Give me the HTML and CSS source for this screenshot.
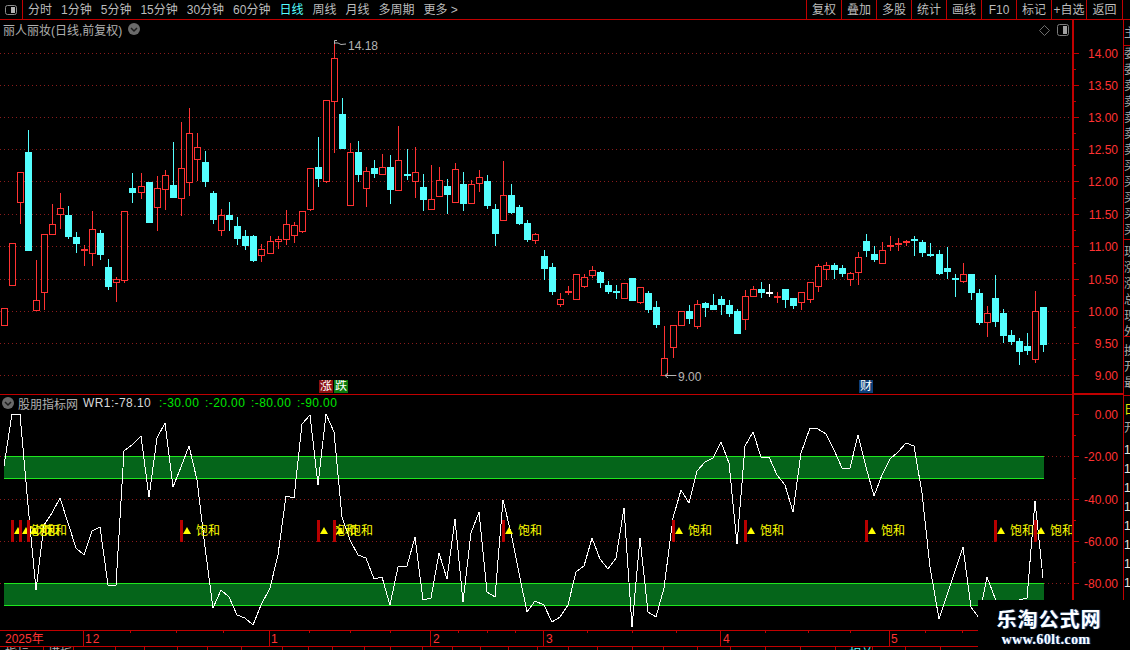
FILE: index.html
```html
<!DOCTYPE html>
<html lang="zh-CN">
<head>
    <meta charset="UTF-8">
    <meta name="viewport" content="width=device-width, initial-scale=1.0">
    <title>丽人丽妆 日线</title>
    <link rel="stylesheet" href="styles.css">
</head>
<body>
    <div class="app">
        <div class="toolbar">
            <div class="panel-toggle">
                <svg width="12" height="10" viewBox="0 0 12 10"><rect x="0.5" y="0.5" width="11" height="9" rx="2" fill="none" stroke="#8c8c8c"/><rect x="6" y="2" width="4" height="6" fill="#b4b4b4"/></svg>
            </div>
            <div class="periods">
                <span>分时</span>
                <span>1分钟</span>
                <span>5分钟</span>
                <span>15分钟</span>
                <span>30分钟</span>
                <span>60分钟</span>
                <span class="active">日线</span>
                <span>周线</span>
                <span>月线</span>
                <span>多周期</span>
                <span>更多 &gt;</span>
            </div>
            <div class="actions">
                <span>复权</span>
                <span>叠加</span>
                <span>多股</span>
                <span>统计</span>
                <span>画线</span>
                <span>F10</span>
                <span>标记</span>
                <span>+自选</span>
                <span class="last">返回</span>
            </div>
        </div>

        <div class="workspace">
            <div class="charts">
                <div class="pane pane-main">
                    <div class="pane-title">
                        <span>丽人丽妆(日线,前复权)</span>
                        <svg class="chevron" width="12" height="12" viewBox="0 0 12 12"><circle cx="6" cy="6" r="6" fill="#6a6a6a"/><polyline points="3,5 6,8 9,5" fill="none" stroke="#1c1c1c" stroke-width="1.5"/></svg>
                    </div>
                    <div class="pane-tools">
                        <svg width="11" height="11" viewBox="0 0 11 11"><path d="M5.5 0.5 L10.5 5.5 L5.5 10.5 L0.5 5.5 Z" fill="none" stroke="#6e6e6e"/></svg>
                        <svg width="12" height="12" viewBox="0 0 12 12"><rect x="0.5" y="0.5" width="11" height="11" rx="2" fill="none" stroke="#7c7c7c"/><rect x="6" y="2" width="4" height="8" fill="#a0a0a0"/></svg>
                    </div>
                    <svg id="mainChart" class="chart" width="1123" height="375" viewBox="0 20 1123 375"></svg>
                    <span class="badge badge-up">涨</span>
                    <span class="badge badge-down">跌</span>
                    <span class="badge badge-news">财</span>
                </div>

                <div class="pane pane-sub">
                    <div class="pane-title sub-title">
                        <svg class="chevron" width="12" height="12" viewBox="0 0 12 12"><circle cx="6" cy="6" r="6" fill="#6a6a6a"/><polyline points="3,5 6,8 9,5" fill="none" stroke="#1c1c1c" stroke-width="1.5"/></svg>
                        <span>股朋指标网</span>
                        <span class="wr-value">WR1:-78.10</span>
                        <span class="wr-level">:-30.00</span>
                        <span class="wr-level">:-20.00</span>
                        <span class="wr-level">:-80.00</span>
                        <span class="wr-level">:-90.00</span>
                    </div>
                    <svg id="subChart" class="chart" width="1123" height="235" viewBox="0 395 1123 235"></svg>
                </div>

                <svg id="dateAxis" class="chart" width="1123" height="20" viewBox="0 630 1123 20"></svg>
            </div>

            <div class="side">
                <div class="side-block side-top"><p>主力</p></div>
                <div class="side-block side-quote"><p>委比</p><p>委差</p><p>卖五</p><p>卖四</p><p>卖三</p><p>卖二</p><p>卖一</p><p>买一</p><p>买二</p><p>买三</p><p>买四</p><p>买五</p></div>
                <div class="side-block side-deal"><p>现价</p><p>涨跌</p><p>涨幅</p><p>总量</p><p>现量</p><p>外盘</p></div>
                <div class="side-block side-extra"><p>换手</p><p>开盘</p><p>最高</p></div>
                <div class="side-block side-stats">
                    <p class="side-flag">日</p>
                    <p class="side-head">开</p>
                    <p>1</p><p>1</p><p>1</p><p>1</p><p>1</p><p>1</p><p>1</p><p>1</p>
                </div>
            </div>
        </div>

        <div class="watermark">
            <div class="wm-name">乐淘公式网</div>
            <div class="wm-url">www.60lt.com</div>
        </div>
    </div>

    <script src="chart.js"></script>
</body>
</html>
```

FILE: styles.css
```css
html, body {
    margin: 0;
    padding: 0;
    background: #000;
    overflow: hidden;
}

.app {
    position: relative;
    width: 1130px;
    height: 650px;
    overflow: hidden;
    font-family: "Liberation Sans", "Noto Sans CJK SC", sans-serif;
    font-size: 12px;
    color: #bcbcbc;
}

.toolbar {
    display: flex;
    height: 19px;
    line-height: 20px;
    border-bottom: 1px solid #c00000;
}

.panel-toggle {
    display: flex;
    align-items: center;
    justify-content: center;
    width: 23px;
    border-right: 1px solid #c00000;
    box-sizing: border-box;
}

.periods {
    display: flex;
    gap: 9px;
    padding-left: 5px;
}

.periods .active {
    color: #54ffff;
}

.actions {
    display: flex;
    margin-left: auto;
    margin-right: 7px;
}

.actions span {
    width: 35px;
    text-align: center;
    border-left: 1px solid #c00000;
    box-sizing: border-box;
    white-space: nowrap;
    overflow: hidden;
}

.actions .last {
    width: 37px;
    border-right: 1px solid #c00000;
}

.workspace {
    display: flex;
    height: 630px;
}

.charts {
    width: 1123px;
    flex: none;
}

.pane {
    position: relative;
}

.pane-main {
    height: 375px;
}

.pane-sub {
    height: 235px;
}

.chart {
    display: block;
}

.pane-title {
    position: absolute;
    top: 1px;
    left: 3px;
    display: flex;
    align-items: center;
    gap: 6px;
    height: 16px;
    color: #b0b0b0;
}

.sub-title {
    top: 0;
    left: 2px;
    gap: 4px;
}

.wr-value {
    margin-left: 1px;
    margin-right: 2px;
    letter-spacing: 0.4px;
    color: #d8d8d8;
}

.wr-level {
    margin-left: 2px;
    width: 40px;
    letter-spacing: 0.4px;
    white-space: nowrap;
    color: #00e600;
}

.pane-tools {
    position: absolute;
    top: 4px;
    left: 1039px;
    display: flex;
    align-items: center;
    gap: 7px;
}

.badge {
    position: absolute;
    top: 360px;
    width: 14px;
    height: 13px;
    line-height: 13px;
    text-align: center;
    color: #fff;
    overflow: hidden;
}

.badge-up {
    left: 319px;
    background: #8c0f0f;
}

.badge-down {
    left: 334px;
    background: #0d7a0d;
}

.badge-news {
    left: 859px;
    background: #0d3f7a;
}

.side {
    flex: 1;
    border-left: 1px solid #c00000;
    overflow: hidden;
    white-space: nowrap;
    line-height: 16px;
    color: #a8a8a8;
}

.side p {
    margin: 0;
    width: 30px;
}

.side-block {
    border-bottom: 1px solid #c00000;
    box-sizing: border-box;
    overflow: hidden;
}

.side-top {
    height: 26px;
    padding-top: 5px;
}

.side-quote {
    height: 194px;
}

.side-deal {
    height: 97px;
    padding-top: 4px;
}

.side-extra {
    height: 59px;
    padding-top: 6px;
}

.side-stats {
    border-bottom: none;
    padding-top: 7px;
    color: #e6e6e6;
}

.side-stats p {
    line-height: 19px;
}

.side-stats .side-flag {
    color: #e8e800;
    line-height: 14px;
    margin-bottom: 2px;
}

.side-stats .side-head {
    color: #a8a8a8;
    line-height: 18px;
    margin-bottom: 4px;
}

.watermark {
    position: absolute;
    left: 978px;
    top: 600px;
    width: 152px;
    height: 50px;
    background: #000;
    text-align: center;
    color: #fff;
}

.wm-name {
    padding-top: 6px;
    padding-right: 10px;
    font-family: "Noto Sans CJK SC", sans-serif;
    font-weight: 700;
    font-size: 20px;
    line-height: 26px;
    letter-spacing: 1px;
    text-shadow: 1px 0 1px #3b6ea8;
}

.wm-url {
    padding-right: 16px;
    font-family: "Liberation Serif", serif;
    font-weight: 700;
    font-size: 14px;
    line-height: 16px;
    letter-spacing: 0.4px;
    text-shadow: 1px 0 1px #3b6ea8;
}

/* svg parts of the chart */
.grid {
    stroke: #8a1c1c;
    stroke-width: 1;
    stroke-dasharray: 1 3;
}

.axis-line {
    stroke: #c00000;
    stroke-width: 1;
    shape-rendering: crispEdges;
}

.axis-heavy {
    stroke: #c00000;
    stroke-width: 2;
    shape-rendering: crispEdges;
}

.axis-label {
    fill: #ff3232;
    font-size: 12px;
    text-anchor: end;
}

.date-label {
    fill: #ff3232;
    font-size: 12px;
}

.date-label-wide {
    letter-spacing: 1px;
}

.candle {
    shape-rendering: crispEdges;
}

.wr-line {
    fill: none;
    stroke: #fff;
    stroke-width: 1;
    shape-rendering: crispEdges;
}

.band {
    fill: #05651a;
}

.band-edge {
    stroke: #1fe61f;
    stroke-width: 1;
    shape-rendering: crispEdges;
}

.signal-bar {
    fill: #b80000;
}

.signal-mark {
    fill: #ffff00;
}

.signal-text {
    fill: #ffff00;
    font-size: 12px;
}

.note-text {
    fill: #b4b4b4;
    font-size: 12px;
}

.note-line {
    fill: none;
    stroke: #b4b4b4;
    stroke-width: 1;
}

.tab-text {
    fill: #b4b4b4;
    font-size: 12px;
}

.tab-text-on {
    fill: #54ffff;
    font-size: 12px;
}
```

FILE: chart.js
```js
const SVG_NS = "http://www.w3.org/2000/svg";
const AXIS_X = 1072;

// high, body top, body bottom, low (pixel rows), kind
const candles = [
    [308,308,325,325,"r"],[243,243,285,285,"r"],[172,172,202,223,"r"],[130,152,250,250,"c"],[260,300,310,310,"r"],
    [234,234,292,309,"r"],[204,224,234,234,"r"],[193,208,214,228,"r"],[206,215,236,238,"c"],[232,237,243,252,"c"],
    [245,249,250,265,"r"],[211,229,253,265,"r"],[230,233,254,259,"c"],[259,267,286,289,"c"],[277,279,282,301,"r"],
    [211,211,280,282,"r"],[173,188,192,202,"c"],[173,186,192,198,"r"],[182,182,222,222,"c"],[176,188,207,230,"r"],
    [170,175,189,209,"r"],[142,185,197,197,"c"],[122,168,198,215,"r"],[108,133,182,195,"r"],[133,147,159,180,"r"],
    [151,162,181,186,"c"],[191,193,219,223,"c"],[209,215,230,235,"r"],[202,215,219,230,"c"],[217,226,238,244,"c"],
    [230,236,245,249,"c"],[235,236,260,261,"c"],[244,249,255,261,"r"],[236,241,253,253,"r"],[236,239,241,248,"r"],
    [210,224,239,244,"r"],[222,225,235,242,"r"],[211,211,231,232,"r"],[168,168,209,210,"r"],[137,167,178,186,"c"],
    [100,100,181,182,"r"],[43,58,101,152,"r"],[98,114,148,148,"c"],[143,152,205,205,"r"],[141,152,174,181,"c"],
    [167,171,188,206,"r"],[160,168,173,177,"c"],[154,167,174,174,"r"],[155,167,189,203,"c"],[126,160,190,190,"r"],
    [149,174,175,179,"c"],[147,172,181,197,"r"],[174,187,199,210,"c"],[165,199,209,209,"r"],[167,180,196,196,"r"],
    [179,186,194,213,"c"],[163,169,202,202,"r"],[172,184,203,210,"c"],[180,184,203,203,"r"],[170,177,183,191,"r"],
    [175,181,205,208,"c"],[204,209,233,245,"c"],[161,195,220,220,"r"],[184,195,212,213,"c"],[205,207,223,224,"c"],
    [220,223,239,241,"c"],[233,234,240,243,"r"],[250,256,268,279,"c"],[263,267,291,294,"c"],[293,299,304,306,"r"],
    [286,291,292,294,"r"],[274,274,299,299,"r"],[274,277,286,287,"r"],[266,270,275,277,"r"],[271,272,282,287,"c"],
    [281,285,291,293,"c"],[285,291,292,298,"c"],[283,283,298,298,"r"],[278,278,300,300,"c"],[287,287,302,303,"r"],
    [291,293,309,312,"c"],[301,307,324,327,"c"],[326,358,375,375,"r"],[325,325,347,357,"r"],[311,311,325,325,"r"],
    [305,311,318,323,"c"],[300,304,326,328,"r"],[302,303,307,316,"c"],[294,305,309,309,"c"],[296,299,304,314,"c"],
    [300,305,313,316,"c"],[309,311,333,333,"c"],[290,296,319,329,"r"],[286,289,296,296,"r"],[282,289,292,297,"c"],
    [284,292,293,296,"w"],[292,296,297,302,"r"],[289,289,299,307,"c"],[298,298,305,308,"c"],[292,292,302,309,"r"],
    [282,282,299,302,"r"],[264,266,286,291,"r"],[262,265,269,279,"r"],[263,265,269,278,"c"],[265,268,273,276,"c"],
    [272,273,279,285,"r"],[252,257,272,284,"r"],[234,241,250,256,"c"],[246,254,259,261,"c"],[242,250,263,263,"r"],
    [236,245,246,250,"r"],[238,243,244,250,"r"],[240,241,242,245,"r"],[236,239,240,255,"c"],[240,242,252,256,"c"],
    [243,254,255,256,"c"],[250,254,273,274,"c"],[247,268,271,278,"c"],[274,278,279,296,"c"],[263,274,281,282,"r"],
    [274,274,292,299,"c"],[289,293,322,324,"c"],[306,313,322,336,"r"],[275,298,321,326,"c"],[309,313,335,342,"c"],
    [330,335,341,344,"c"],[338,341,351,364,"c"],[333,346,350,354,"c"],[291,311,359,362,"r"],[307,307,344,351,"c"]
];

// WR1 value of each bar, as pixel rows
const wr = [
    466,414,414,505,590,525,513,498,523,548,555,531,527,585,585,451,445,436,497,438,
    423,487,467,446,480,547,608,590,597,615,618,625,605,588,555,496,498,424,415,485,
    414,432,517,540,555,558,579,577,605,567,566,537,600,598,553,579,519,602,533,512,
    592,597,500,533,573,612,601,605,622,617,605,572,566,538,559,569,558,508,627,538,
    612,617,588,518,490,503,471,462,458,442,463,544,446,432,457,457,475,485,512,453,
    428,429,434,450,468,468,435,467,496,475,459,452,443,446,493,567,619,595,571,547,
    607,618,577,598,612,620,600,598,501,578
];

const signalBars = [11, 19, 27, 180, 317, 333, 502, 672, 744, 865, 994, 1034];

const priceRows = [
    ["14.00", 53], ["13.50", 85], ["13.00", 117], ["12.50", 149], ["12.00", 181], ["11.50", 214],
    ["11.00", 246], ["10.50", 279], ["10.00", 311], ["9.50", 343], ["9.00", 375]
];
const wrRows = [["0.00", 414], ["-20.00", 456], ["-40.00", 499], ["-60.00", 541], ["-80.00", 583]];

const monthLabels = [["2025年", 5], ["12", 85], ["1", 271], ["2", 433], ["3", 546], ["4", 723], ["5", 891]];
const monthLines = [83, 269, 430, 543, 720, 889];
const weekTicks = [130, 176, 223, 309, 350, 390, 458, 487, 515, 587, 632, 676, 765, 808, 850, 925, 962];
const tabLines = [43, 73, 115, 144, 177, 207, 241, 282, 308, 332, 364, 390, 422, 452, 480, 508, 537, 568, 597, 632, 663, 697, 730, 765, 800, 835, 872, 905, 940];

function barX(i) {
    return 4 + 8 * i + Math.floor((i + 0.3) / 16.6);
}

function el(parent, tag, attrs, text) {
    const node = document.createElementNS(SVG_NS, tag);
    for (const key in attrs) {
        node.setAttribute(key, attrs[key]);
    }
    if (text) node.textContent = text;
    parent.appendChild(node);
    return node;
}

function drawGrid(svg, y) {
    el(svg, "line", { class: "grid", x1: 0, x2: AXIS_X, y1: y + 0.5, y2: y + 0.5 });
}

function drawAxis(svg, rows, top, bottom) {
    el(svg, "line", { class: "axis-heavy", x1: AXIS_X + 1, x2: AXIS_X + 1, y1: top, y2: bottom });
    rows.forEach(function (row, n) {
        const y = row[1];
        el(svg, "line", { class: "axis-line", x1: AXIS_X, x2: AXIS_X + 7, y1: y + 0.5, y2: y + 0.5 });
        el(svg, "text", { class: "axis-label", x: 1118, y: y + 5 }, row[0]);
        // short tick half way to the next label
        if (n < rows.length - 1) {
            const mid = Math.round((y + rows[n + 1][1]) / 2);
            el(svg, "line", { class: "axis-line", x1: AXIS_X, x2: AXIS_X + 4, y1: mid + 0.5, y2: mid + 0.5 });
        }
    });
}

function drawCandle(svg, c, x) {
    const hi = c[0], top = c[1], bot = c[2], lo = c[3], kind = c[4];
    const color = kind === "c" ? "#54ffff" : kind === "w" ? "#ffffff" : "#ff3232";
    const g = el(svg, "g", { class: "candle" });
    if (hi < top) el(g, "rect", { x: x, y: hi, width: 1, height: top - hi, fill: color });
    if (lo > bot) el(g, "rect", { x: x, y: bot, width: 1, height: lo - bot + 1, fill: color });
    if (kind === "r") {
        el(g, "rect", { x: x - 2.5, y: top + 0.5, width: 6, height: bot - top, fill: "#000", stroke: color });
    } else {
        el(g, "rect", { x: x - 3, y: top, width: 7, height: bot - top + 1, fill: color });
    }
}

function drawMain() {
    const svg = document.getElementById("mainChart");
    priceRows.forEach(function (row) { drawGrid(svg, row[1]); });
    candles.forEach(function (c, i) { drawCandle(svg, c, barX(i)); });

    // high and low notes
    el(svg, "path", { class: "note-line", d: "M334.5 44 V40.5 H337 M335 43 H338 L341 44.5 L346 44" });
    el(svg, "text", { class: "note-text", x: 348, y: 50 }, "14.18");
    el(svg, "path", { class: "note-line", d: "M676 375.5 H665 M668 373 L665 375.5 L668 378" });
    el(svg, "text", { class: "note-text", x: 678, y: 381 }, "9.00");

    drawAxis(svg, priceRows, 20, 395);
    el(svg, "line", { class: "axis-line", x1: 0, x2: AXIS_X, y1: 394.5, y2: 394.5 });
    el(svg, "line", { class: "axis-heavy", x1: AXIS_X, x2: 1123, y1: 394, y2: 394 });
}

function drawBand(svg, top, bottom) {
    el(svg, "rect", { class: "band", x: 4, y: top, width: 1040, height: bottom - top });
    el(svg, "line", { class: "band-edge", x1: 4, x2: 1044, y1: top + 0.5, y2: top + 0.5 });
    el(svg, "line", { class: "band-edge", x1: 4, x2: 1044, y1: bottom + 0.5, y2: bottom + 0.5 });
}

function drawSub() {
    const svg = document.getElementById("subChart");
    const defs = el(svg, "defs", {});
    const clip = el(defs, "clipPath", { id: "plotClip" });
    el(clip, "rect", { x: 0, y: 395, width: AXIS_X, height: 235 });

    wrRows.slice(1).forEach(function (row) { drawGrid(svg, row[1]); });
    drawBand(svg, 456, 478);
    drawBand(svg, 583, 605);

    const points = wr.map(function (y, i) { return barX(i) + "," + y; }).join(" ");
    el(svg, "polyline", { class: "wr-line", points: points });

    const group = el(svg, "g", { "clip-path": "url(#plotClip)" });
    signalBars.forEach(function (x) {
        el(group, "rect", { class: "signal-bar", x: x, y: 520, width: 3, height: 22 });
        el(group, "polygon", { class: "signal-mark", points: (x + 7) + ",527 " + (x + 11) + ",534 " + (x + 3) + ",534" });
        el(group, "text", { class: "signal-text", x: x + 16, y: 535 }, "饱和");
    });

    drawAxis(svg, wrRows, 395, 630);
}

function drawDates() {
    const svg = document.getElementById("dateAxis");
    el(svg, "line", { class: "axis-line", x1: 0, x2: 1123, y1: 630.5, y2: 630.5 });
    el(svg, "line", { class: "axis-line", x1: 0, x2: 1123, y1: 646.5, y2: 646.5 });
    monthLines.forEach(function (x) {
        el(svg, "line", { class: "axis-line", x1: x + 0.5, x2: x + 0.5, y1: 630, y2: 646 });
    });
    weekTicks.forEach(function (x) {
        el(svg, "line", { class: "axis-line", x1: x + 0.5, x2: x + 0.5, y1: 630, y2: 633 });
    });
    monthLabels.forEach(function (m) {
        const wide = m[0] === "12" ? " date-label-wide" : "";
        el(svg, "text", { class: "date-label" + wide, x: m[1], y: 643 }, m[0]);
    });
    tabLines.forEach(function (x) {
        el(svg, "line", { class: "axis-line", x1: x + 0.5, x2: x + 0.5, y1: 646, y2: 650 });
    });
    el(svg, "text", { class: "tab-text", x: 5, y: 658 }, "指标");
    el(svg, "text", { class: "tab-text", x: 48, y: 658 }, "模板");
    el(svg, "text", { class: "tab-text-on", x: 849, y: 658 }, "相关");
}

drawMain();
drawSub();
drawDates();
```
